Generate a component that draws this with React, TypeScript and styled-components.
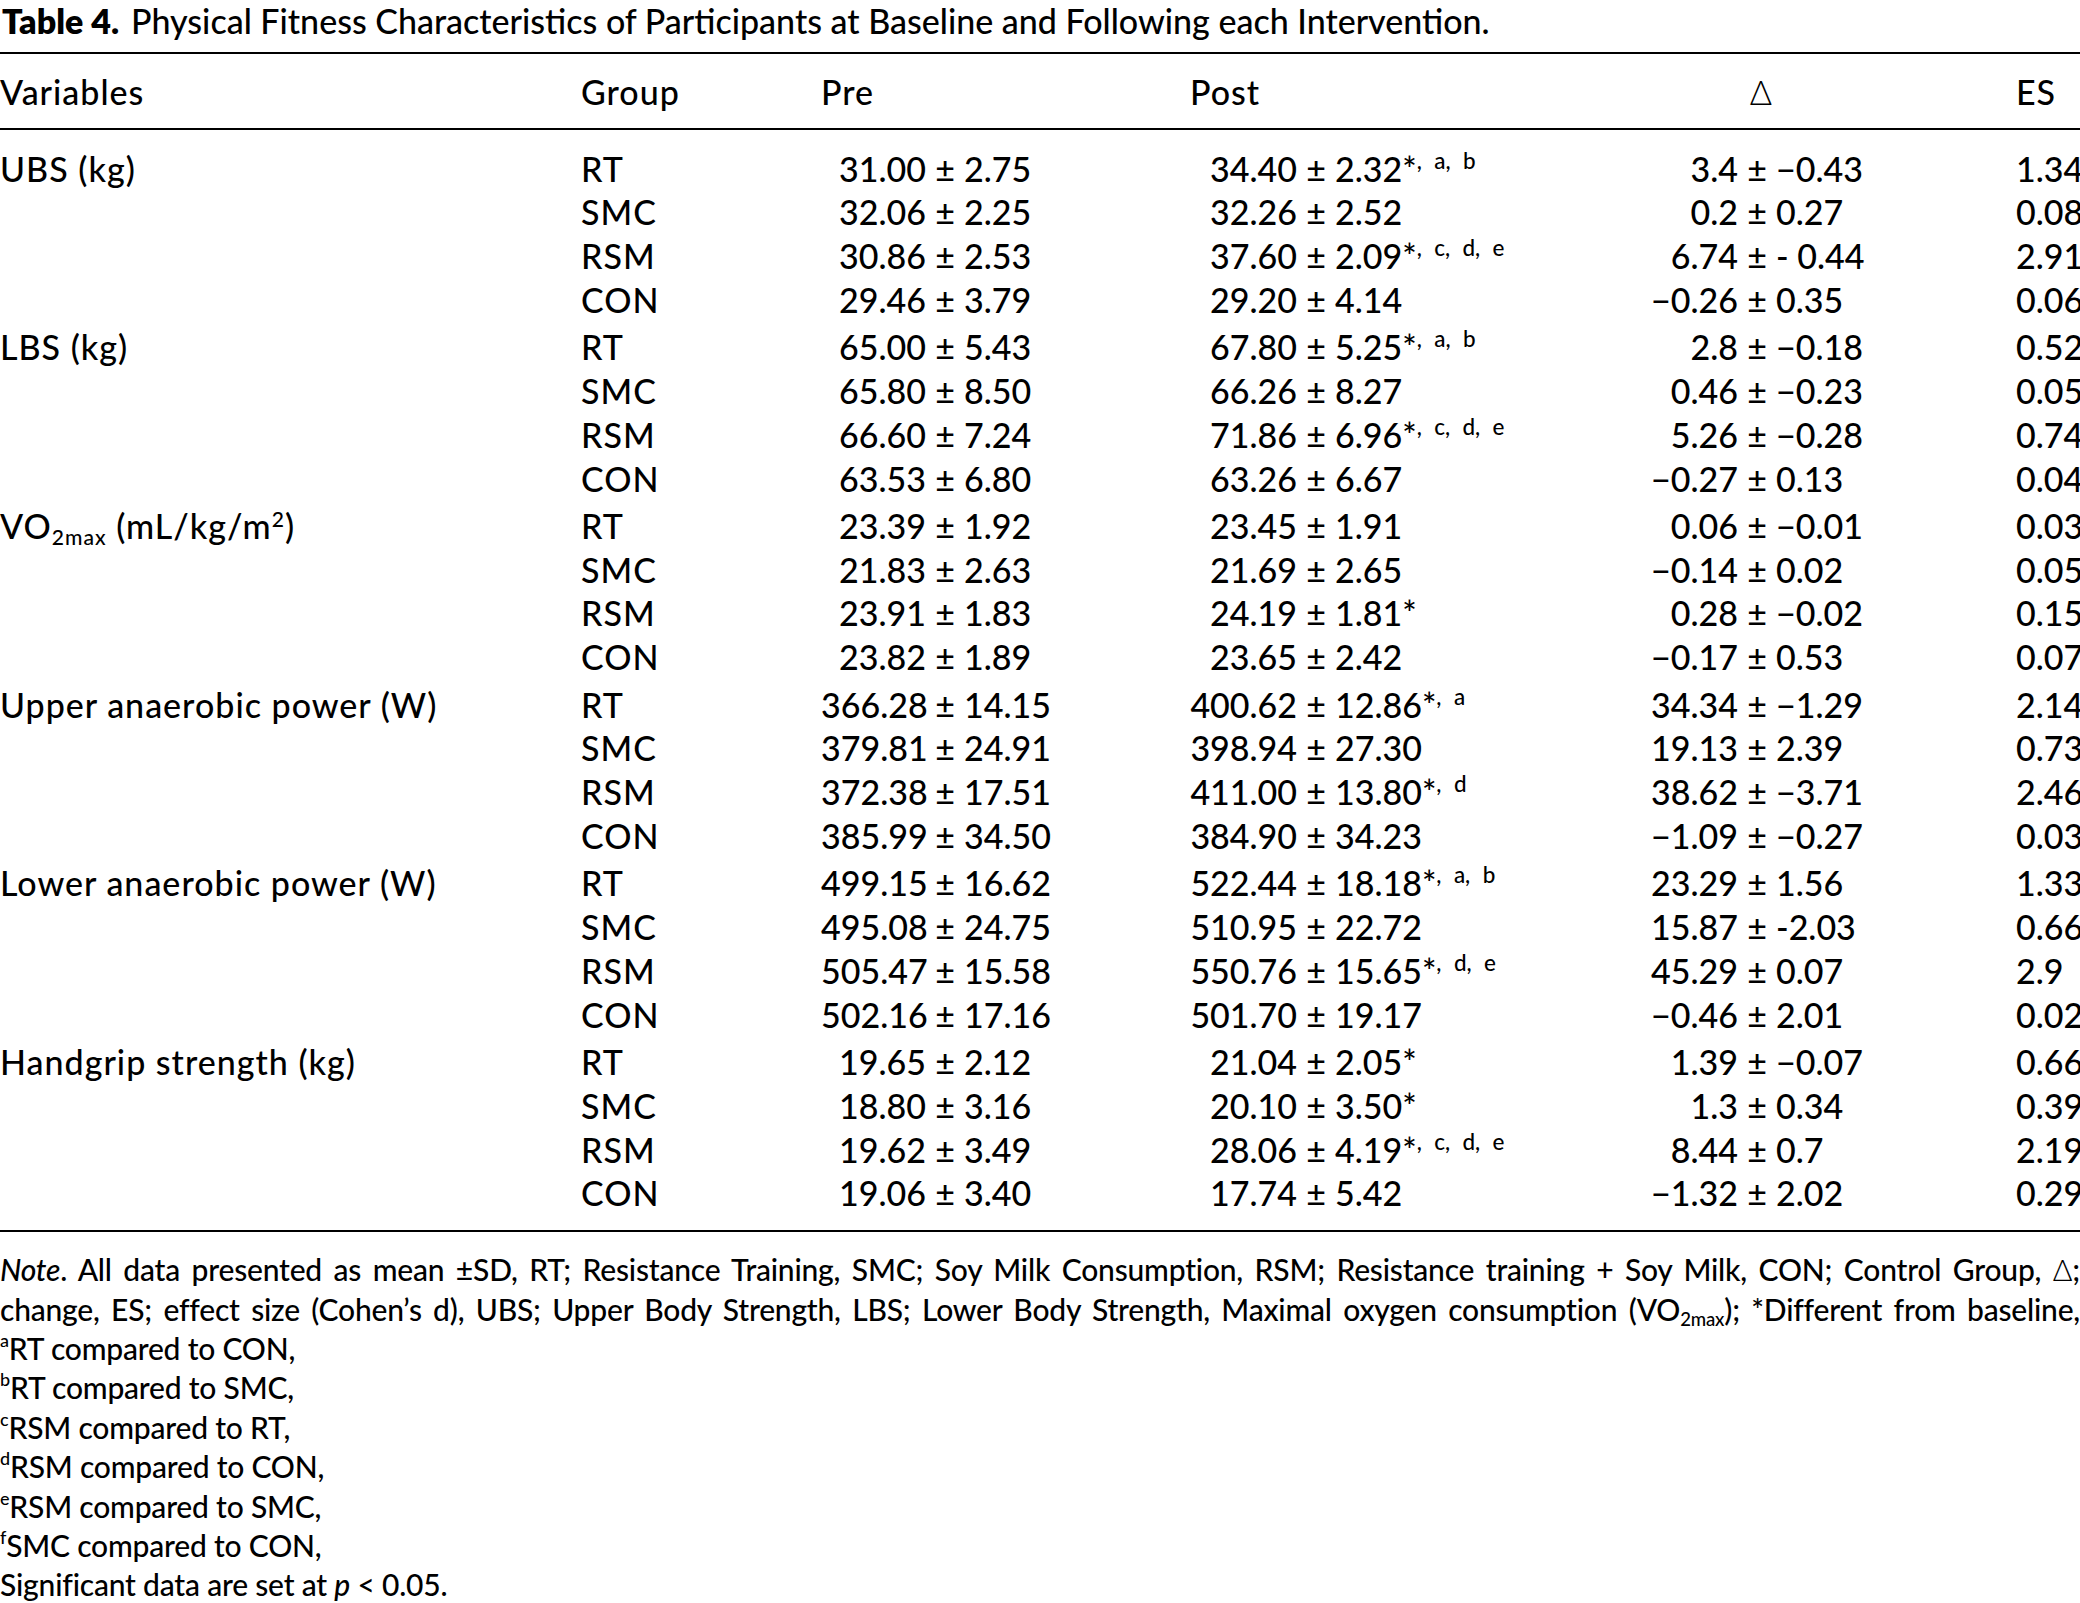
import React from "react"
import styled, { createGlobalStyle } from "styled-components"

const GlobalStyle = createGlobalStyle`
  html, body {
    margin: 0;
    padding: 0;
    background: #fff;
  }
  body {
    width: 2080px;
    height: 1603px;
    overflow: hidden;
    color: #000;
    font-family: Lato, "Liberation Sans", sans-serif;
    font-weight: 500;
  }
`

// column template shared by header and data rows
const COLS = "581px 240px 369px 450px 376px 1fr"

type Pair = [string, string]

type Row = {
  group: string
  pre: Pair
  post: Pair
  star?: boolean
  marks?: string
  delta: Pair
  es: string
}

type Section = {
  label: React.ReactNode
  rows: Row[]
}

const sections: Section[] = [
  {
    label: "UBS (kg)",
    rows: [
      { group: "RT", pre: ["31.00", "2.75"], post: ["34.40", "2.32"], star: true, marks: "a, b", delta: ["3.4", "\u22120.43"], es: "1.34" },
      { group: "SMC", pre: ["32.06", "2.25"], post: ["32.26", "2.52"], delta: ["0.2", "0.27"], es: "0.08" },
      { group: "RSM", pre: ["30.86", "2.53"], post: ["37.60", "2.09"], star: true, marks: "c, d, e", delta: ["6.74", "- 0.44"], es: "2.91" },
      { group: "CON", pre: ["29.46", "3.79"], post: ["29.20", "4.14"], delta: ["\u22120.26", "0.35"], es: "0.06" },
    ],
  },
  {
    label: "LBS (kg)",
    rows: [
      { group: "RT", pre: ["65.00", "5.43"], post: ["67.80", "5.25"], star: true, marks: "a, b", delta: ["2.8", "\u22120.18"], es: "0.52" },
      { group: "SMC", pre: ["65.80", "8.50"], post: ["66.26", "8.27"], delta: ["0.46", "\u22120.23"], es: "0.05" },
      { group: "RSM", pre: ["66.60", "7.24"], post: ["71.86", "6.96"], star: true, marks: "c, d, e", delta: ["5.26", "\u22120.28"], es: "0.74" },
      { group: "CON", pre: ["63.53", "6.80"], post: ["63.26", "6.67"], delta: ["\u22120.27", "0.13"], es: "0.04" },
    ],
  },
  {
    label: (
      <>
        VO<sub>2max</sub> (mL/kg/m<sup>2</sup>)
      </>
    ),
    rows: [
      { group: "RT", pre: ["23.39", "1.92"], post: ["23.45", "1.91"], delta: ["0.06", "\u22120.01"], es: "0.03" },
      { group: "SMC", pre: ["21.83", "2.63"], post: ["21.69", "2.65"], delta: ["\u22120.14", "0.02"], es: "0.05" },
      { group: "RSM", pre: ["23.91", "1.83"], post: ["24.19", "1.81"], star: true, delta: ["0.28", "\u22120.02"], es: "0.15" },
      { group: "CON", pre: ["23.82", "1.89"], post: ["23.65", "2.42"], delta: ["\u22120.17", "0.53"], es: "0.07" },
    ],
  },
  {
    label: "Upper anaerobic power (W)",
    rows: [
      { group: "RT", pre: ["366.28", "14.15"], post: ["400.62", "12.86"], star: true, marks: "a", delta: ["34.34", "\u22121.29"], es: "2.14" },
      { group: "SMC", pre: ["379.81", "24.91"], post: ["398.94", "27.30"], delta: ["19.13", "2.39"], es: "0.73" },
      { group: "RSM", pre: ["372.38", "17.51"], post: ["411.00", "13.80"], star: true, marks: "d", delta: ["38.62", "\u22123.71"], es: "2.46" },
      { group: "CON", pre: ["385.99", "34.50"], post: ["384.90", "34.23"], delta: ["\u22121.09", "\u22120.27"], es: "0.03" },
    ],
  },
  {
    label: "Lower anaerobic power (W)",
    rows: [
      { group: "RT", pre: ["499.15", "16.62"], post: ["522.44", "18.18"], star: true, marks: "a, b", delta: ["23.29", "1.56"], es: "1.33" },
      { group: "SMC", pre: ["495.08", "24.75"], post: ["510.95", "22.72"], delta: ["15.87", "-2.03"], es: "0.66" },
      { group: "RSM", pre: ["505.47", "15.58"], post: ["550.76", "15.65"], star: true, marks: "d, e", delta: ["45.29", "0.07"], es: "2.9" },
      { group: "CON", pre: ["502.16", "17.16"], post: ["501.70", "19.17"], delta: ["\u22120.46", "2.01"], es: "0.02" },
    ],
  },
  {
    label: "Handgrip strength (kg)",
    rows: [
      { group: "RT", pre: ["19.65", "2.12"], post: ["21.04", "2.05"], star: true, delta: ["1.39", "\u22120.07"], es: "0.66" },
      { group: "SMC", pre: ["18.80", "3.16"], post: ["20.10", "3.50"], star: true, delta: ["1.3", "0.34"], es: "0.39" },
      { group: "RSM", pre: ["19.62", "3.49"], post: ["28.06", "4.19"], star: true, marks: "c, d, e", delta: ["8.44", "0.7"], es: "2.19" },
      { group: "CON", pre: ["19.06", "3.40"], post: ["17.74", "5.42"], delta: ["\u22121.32", "2.02"], es: "0.29" },
    ],
  },
]

const footnotes: Pair[] = [
  ["a", "RT compared to CON,"],
  ["b", "RT compared to SMC,"],
  ["c", "RSM compared to RT,"],
  ["d", "RSM compared to CON,"],
  ["e", "RSM compared to SMC,"],
  ["f", "SMC compared to CON,"],
]

const App = () => {
  return (
    <>
      <GlobalStyle />
      <Page>
        <Caption>
          <CaptionLabel>Table 4.</CaptionLabel>
          Physical Fitness Characteristics of Participants at Baseline and Following each Intervention.
        </Caption>
        <Table>
          <HeadRow>
            <Label>Variables</Label>
            <Label>Group</Label>
            <Label>Pre</Label>
            <Label>Post</Label>
            <ValueCell $lw={102}>
              <Left />
              <Pm>
                <Delta>Δ</Delta>
              </Pm>
              <Right />
            </ValueCell>
            <Label>ES</Label>
          </HeadRow>
          <Body>
            {sections.map((section, si) => (
              <Group key={si} $first={si === 0}>
                {section.rows.map((row, ri) => (
                  <DataRow key={ri}>
                    <Label>{ri === 0 ? section.label : null}</Label>
                    <Label>{row.group}</Label>
                    <ValueCell $lw={105}>
                      <Left>{row.pre[0]}</Left>
                      <Pm>±</Pm>
                      <Right>{row.pre[1]}</Right>
                    </ValueCell>
                    <ValueCell $lw={107}>
                      <Left>{row.post[0]}</Left>
                      <Pm>±</Pm>
                      <Right>
                        {row.post[1]}
                        {row.star && <Star>*</Star>}
                        {row.marks && <Marks>, {row.marks}</Marks>}
                      </Right>
                    </ValueCell>
                    <ValueCell $lw={98}>
                      <Left>{row.delta[0]}</Left>
                      <Pm>±</Pm>
                      <Right>{row.delta[1]}</Right>
                    </ValueCell>
                    <Cell>{row.es}</Cell>
                  </DataRow>
                ))}
              </Group>
            ))}
          </Body>
        </Table>
        <Notes>
          <NoteLine $justify>
            <i>Note</i>. All data presented as mean ±SD, RT; Resistance Training, SMC; Soy Milk Consumption, RSM;
            Resistance training + Soy Milk, CON; Control Group, <Delta>Δ</Delta>;
          </NoteLine>
          <NoteLine $justify>
            change, ES; effect size (Cohen’s d), UBS; Upper Body Strength, LBS; Lower Body Strength, Maximal oxygen
            consumption (VO<sub>2max</sub>); *Different from baseline,
          </NoteLine>
          {footnotes.map(([mark, text]) => (
            <NoteLine key={mark}>
              <NoteMark>{mark}</NoteMark>
              {text}
            </NoteLine>
          ))}
          <NoteLine>
            Significant data are set at <i>p</i> &lt; 0.05.
          </NoteLine>
        </Notes>
      </Page>
    </>
  )
}

const Page = styled.div`
  width: 2080px;
  sub {
    font-size: 0.62em;
    vertical-align: -0.28em;
    line-height: 0;
  }
  sup {
    font-size: 0.62em;
    vertical-align: 0.55em;
    line-height: 0;
  }
`

const Caption = styled.div`
  font-size: 34px;
  line-height: 41px;
  padding-left: 2px;
  white-space: nowrap;
`

const CaptionLabel = styled.b`
  font-weight: 800;
  margin-right: 0.35em;
`

const Table = styled.div`
  margin-top: 11px;
  border-top: 2px solid #000;
  border-bottom: 2px solid #000;
  font-size: 34px;
`

const HeadRow = styled.div`
  display: grid;
  grid-template-columns: ${COLS};
  height: 74px;
  align-items: center;
  border-bottom: 2px solid #000;
`

const Body = styled.div`
  padding: 16.5px 0 15px;
`

const Group = styled.div<{ $first: boolean }>`
  margin-top: ${(p) => (p.$first ? 0 : 3.5)}px;
`

const DataRow = styled.div`
  display: grid;
  grid-template-columns: ${COLS};
  height: 43.8px;
  line-height: 43.8px;
  align-items: center;
`

const Cell = styled.div`
  white-space: nowrap;
`

// word cells: Gill Sans letters run wider than Lato's
const Label = styled(Cell)`
  letter-spacing: 1px;
`

const ValueCell = styled.div<{ $lw: number }>`
  display: grid;
  grid-template-columns: ${(p) => p.$lw}px 38px auto;
  white-space: nowrap;
`

const Left = styled.span`
  text-align: right;
`

const Pm = styled.span`
  text-align: center;
`

const Right = styled.span`
  text-align: left;
`

const Delta = styled.span`
  font-weight: 300;
`

const Star = styled.span`
  font-size: 1em;
`

const Marks = styled.span`
  font-size: 0.66em;
  vertical-align: 0.6em;
  line-height: 0;
  word-spacing: 0.3em;
`

const Notes = styled.div`
  padding-top: 18px;
  font-size: 30px;
  line-height: 39.4px;
  letter-spacing: -0.2px;
`

const NoteLine = styled.div<{ $justify?: boolean }>`
  white-space: nowrap;
  text-align: ${(p) => (p.$justify ? "justify" : "left")};
  text-align-last: ${(p) => (p.$justify ? "justify" : "left")};
`

const NoteMark = styled.span`
  font-size: 0.6em;
  vertical-align: 0.7em;
  line-height: 0;
`

export default App
